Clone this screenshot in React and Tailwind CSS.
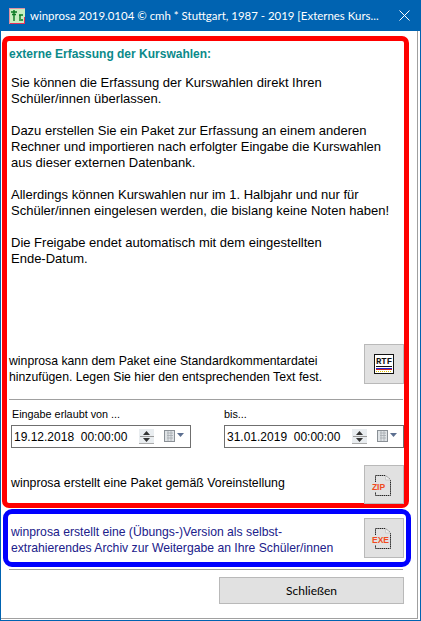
import React from 'react';

const FONT = "font-['Liberation_Sans',Arial,sans-serif]";

function WinIcon() {
  return (
    <svg width="16" height="16" viewBox="0 0 16 16" className="shrink-0">
      <rect x="0" y="0" width="16" height="16" fill="#c8eec0" />
      <path d="M0 15.5H16M15.5 16V9" stroke="#e8305a" strokeWidth="1" />
      <path d="M0 .5H16M.5 0V16" stroke="#e090a0" strokeWidth="1" />
      <path d="M2 4H8M3 6.5H7M5 2V13M10 7H14M11 7V13M12 12H14" stroke="#0a7a20" strokeWidth="1.4" fill="none" />
    </svg>
  );
}

function RtfIcon() {
  return (
    <svg width="20" height="20" viewBox="0 0 20 20">
      <rect x="0.5" y="0.5" width="19" height="19" fill="#fff" stroke="#111" />
      <text x="10" y="10" textAnchor="middle" fontSize="9" fontFamily="Liberation Mono, monospace" fontWeight="700" fill="#111">RTF</text>
      <path d="M2 12.5H18" stroke="#111" />
      <path d="M2 14.5H18" stroke="#2222cc" />
      <path d="M2 15.5H18" stroke="#cc2222" />
      <path d="M2 17.5H18" stroke="#e0c000" strokeDasharray="1 1" />
    </svg>
  );
}

function FileIcon({ label, labelX }) {
  return (
    <svg width="26" height="24" viewBox="0 0 26 24">
      <path d="M4.5 9V2.5H14.5L19.5 7V22.5H4.5V19" fill="none" stroke="#222" strokeDasharray="1.5 .6" />
      <path d="M14.5 2.5V7H19.5" fill="#eee" stroke="#ccc" />
      <text x={labelX} y="17" textAnchor="middle" fontSize="8.5" fontWeight="700" fontFamily="Liberation Sans, sans-serif" fill="#f04a20">{label}</text>
    </svg>
  );
}

function SquareButton({ children, className = 'h-10' }) {
  return (
    <button className={`w-10 shrink-0 flex items-center justify-center bg-[#e1e1e1] border border-[#b9b9b9] ${className}`}>
      {children}
    </button>
  );
}

function DateField({ value }) {
  return (
    <div className="w-[180px] h-[23px] flex items-center border border-[#6f6f6f] bg-white pl-[2px]">
      <span className="text-[12px] leading-none text-black w-[125px] whitespace-pre">{value}</span>
      <div className="w-[15px] h-[15px] flex flex-col items-center justify-center gap-[1px] bg-[#e9edf0] border-b border-[#aaa]">
        <svg width="7" height="4" viewBox="0 0 7 4"><path d="M3.5 0L7 4H0Z" fill="#333" /></svg>
        <div className="w-[14px] h-px bg-[#999]" />
        <svg width="7" height="4" viewBox="0 0 7 4"><path d="M0 0H7L3.5 4Z" fill="#333" /></svg>
      </div>
      <svg width="22" height="13" viewBox="0 0 22 13" className="ml-[10px]">
        <rect x="0.5" y="0.5" width="10" height="11" fill="#dfe3e6" stroke="#8a9096" />
        <path d="M3 3H9M3 5.5H9M3 8H9M4 1V11M7 1V11" stroke="#a5abb0" strokeWidth=".8" />
        <path d="M13 3H20L16.5 7Z" fill="#5c6f90" />
      </svg>
    </div>
  );
}

export default function App() {
  return (
    <div className={`w-[421px] h-[621px] flex flex-col bg-white text-[13px] leading-[16px] text-black border-x border-b border-[#0063b1] ${FONT}`}>
      {/* Titelleiste */}
      <div className="h-[31px] -mx-px shrink-0 flex items-center bg-[#0063b1] pl-[9px] text-white">
        <WinIcon />
        <span className="ml-[5px] text-[11.45px] font-['Lato',sans-serif] whitespace-nowrap">winprosa 2019.0104 © cmh * Stuttgart, 1987 - 2019 [Externes Kurs...</span>
        <svg width="11" height="11" viewBox="0 0 11 11" className="ml-auto mr-[11px] shrink-0">
          <path d="M.5 .5L10.5 10.5M10.5 .5L.5 10.5" stroke="#fff" strokeWidth="1" />
        </svg>
      </div>

      <div className="flex-1 flex flex-col mr-[2px] mb-[1px] border-r border-b border-[#a0a0a0] pt-[5px]">
        {/* roter Rahmen */}
        <div className="w-[407px] h-[472px] ml-[1px] border-[5px] border-[#ff0000] rounded-[7px] flex flex-col">
          <div className="pl-[2px] pt-[5px] font-bold text-[12px] text-[#0b8a8a]">externe Erfassung der Kurswahlen:</div>
          <div className="pl-[4px] mt-[13px] flex flex-col gap-[16px]">
            <p>Sie können die Erfassung der Kurswahlen direkt Ihren<br />Schüler/innen überlassen.</p>
            <p>Dazu erstellen Sie ein Paket zur Erfassung an einem anderen<br />Rechner und importieren nach erfolgter Eingabe die Kurswahlen<br />aus dieser externen Datenbank.</p>
            <p>Allerdings können Kurswahlen nur im 1. Halbjahr und nur für<br />Schüler/innen eingelesen werden, die bislang keine Noten haben!</p>
            <p>Die Freigabe endet automatisch mit dem eingestellten<br />Ende-Datum.</p>
          </div>

          <div className="mt-auto pl-[2px] -mb-px">
            <div className="flex items-start justify-between">
              <p className="mt-[9px] text-[12.25px]">winprosa kann dem Paket eine Standardkommentardatei<br />hinzufügen. Legen Sie hier den entsprechenden Text fest.</p>
              <SquareButton><RtfIcon /></SquareButton>
            </div>
            <div className="h-px bg-[#a0a0a0] mt-[14px] mr-[1px]" />
            <div className="flex justify-between pl-[2px] mt-[7px]">
              <div>
                <div className="text-[10.8px] leading-[14px] mb-[4px] ml-px">Eingabe erlaubt von ...</div>
                <DateField value="19.12.2018  00:00:00" />
              </div>
              <div>
                <div className="text-[10.8px] leading-[14px] mb-[4px]">bis...</div>
                <DateField value="31.01.2019  00:00:00" />
              </div>
            </div>
            <div className="flex items-start justify-between mt-[17px]">
              <p className="pl-[2px] mt-[10px] text-[12.35px]">winprosa erstellt eine Paket gemäß Voreinstellung</p>
              <SquareButton className="h-[39px]"><FileIcon label="ZIP" labelX="7.5" /></SquareButton>
            </div>
          </div>
        </div>

        {/* blauer Rahmen */}
        <div className="w-[408px] h-[58px] ml-[2px] mt-[1px] border-[5px] border-[#0000ff] rounded-[9px] flex items-center justify-between pr-[2px] pl-[3px]">
          <p className="text-[12.2px] text-[#20208a] mt-[3px]">winprosa erstellt eine (Übungs-)Version als selbst-<br />extrahierendes Archiv zur Weitergabe an Ihre Schüler/innen</p>
          <SquareButton><FileIcon label="EXE" labelX="9.5" /></SquareButton>
        </div>

        <div className="h-px bg-[#a0a0a0] ml-[8px] w-[394px] mt-[2px]" />
        <div className="flex justify-end mt-[7px] mr-[13px]">
          <button className="w-[185px] h-[27px] bg-[#e1e1e1] border border-[#b9b9b9] text-[12px] font-['Lato',sans-serif] text-black">Schließen</button>
        </div>
      </div>
    </div>
  );
}
